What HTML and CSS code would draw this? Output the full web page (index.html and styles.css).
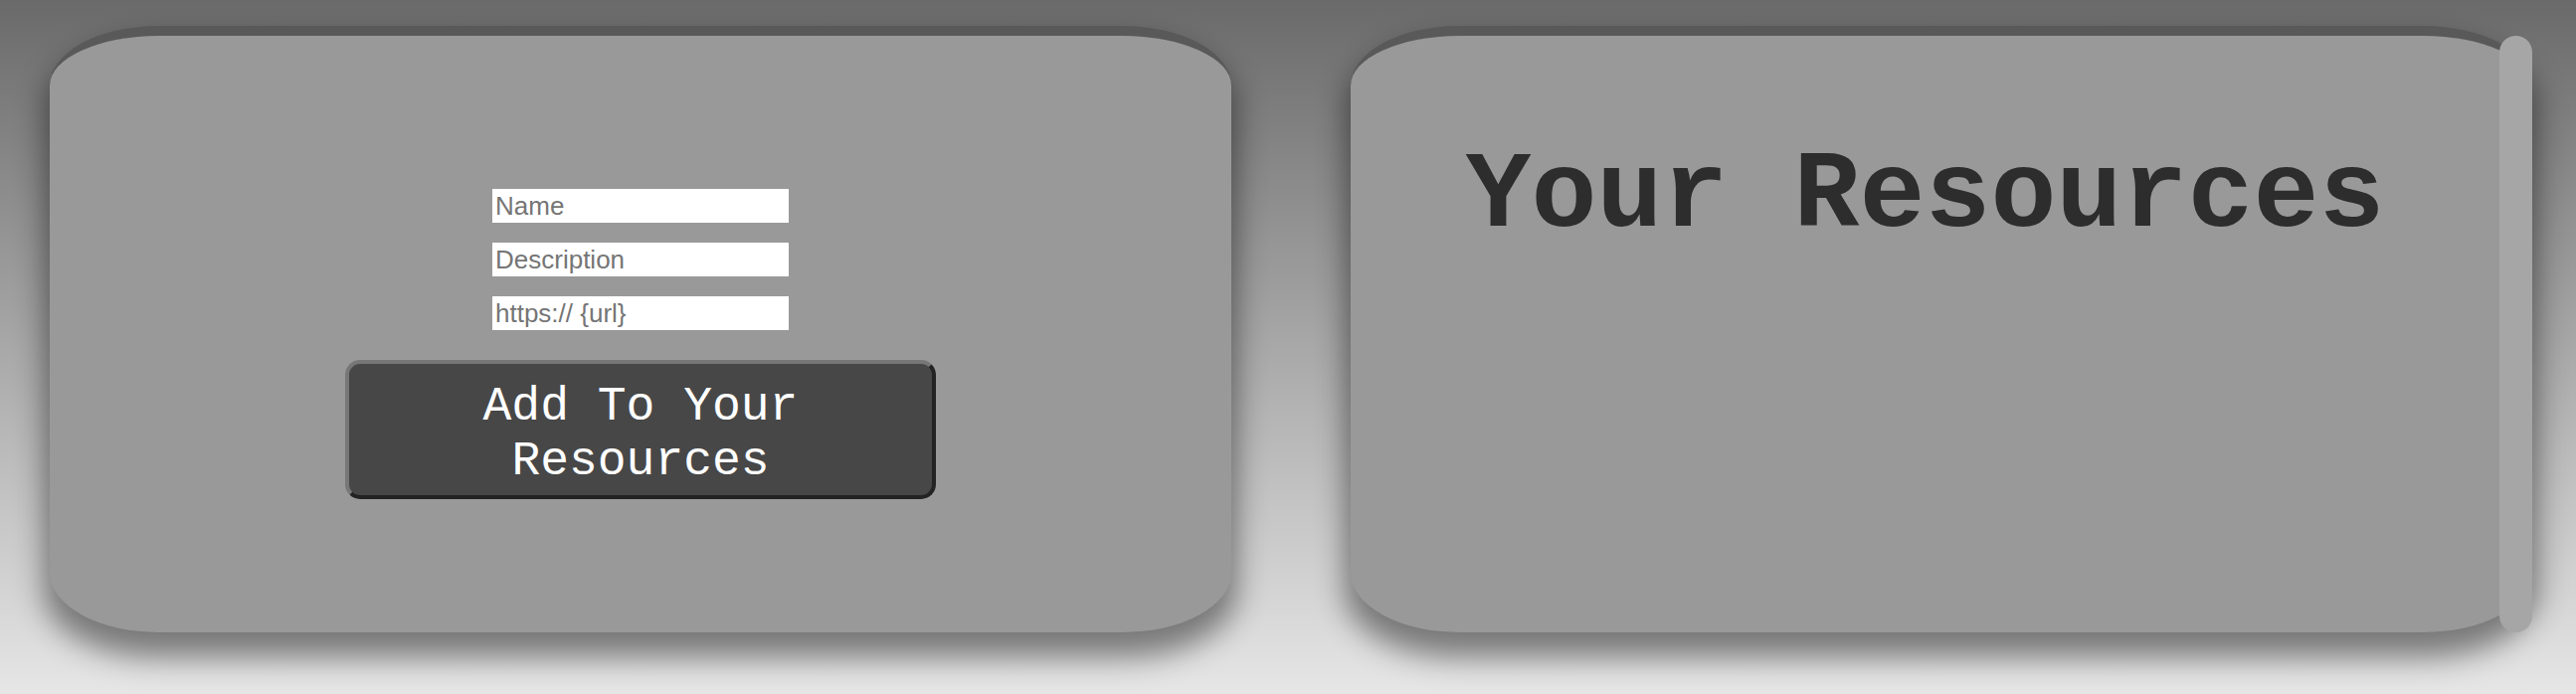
FILE: index.html
```html
<!DOCTYPE html>
<html lang="en">
<head>
<meta charset="utf-8">
<title>Resources</title>
<link rel="stylesheet" href="styles.css">
</head>
<body>
<main class="page">
  <section class="card add-card">
    <form class="add-form">
      <input class="field" type="text" placeholder="Name">
      <input class="field" type="text" placeholder="Description">
      <input class="field" type="text" placeholder="https:// {url}">
      <button class="add-btn" type="button">Add To Your Resources</button>
    </form>
  </section>
  <div class="list-wrap">
    <section class="card list-card">
      <h1 class="list-title">Your Resources</h1>
      <ul class="resource-list"></ul>
    </section>
    <div class="scroll-thumb" aria-hidden="true"></div>
  </div>
</main>
</body>
</html>
```

FILE: styles.css
```css
html, body {
  margin: 0;
  padding: 0;
  height: 100%;
}

body {
  background: linear-gradient(to bottom, #6a6a6a 0%, #e6e6e6 100%);
  font-family: "Liberation Sans", Arial, sans-serif;
  overflow: hidden;
}

.page {
  display: flex;
  gap: 120px;
  padding: 26px 44px 0 50px;
}

.card {
  box-sizing: border-box;
  width: 1188px;
  height: 610px;
  flex: 0 0 auto;
  background: #999999;
  border-top: 10px solid #595959;
  border-radius: 110px / 60px;
  box-shadow: 0 20px 30px 5px rgba(0, 0, 0, 0.45);
}

.add-form {
  display: flex;
  flex-direction: column;
  align-items: center;
  gap: 20px;
  padding-top: 154px;
  margin: 0;
}

.field {
  box-sizing: border-box;
  width: 298px;
  height: 34px;
  border: none;
  outline: none;
  padding: 1px 3px;
  margin: 0;
  background: #ffffff;
  font-family: "Liberation Sans", Arial, sans-serif;
  font-size: 26px;
  color: #222;
}

.field::placeholder {
  color: #757575;
}

.add-btn {
  box-sizing: border-box;
  width: 594px;
  margin-top: 10px;
  padding: 16px 0 6px;
  background: #474747;
  color: #ffffff;
  border: 4px solid;
  border-color: #777777 #232323 #232323 #777777;
  border-radius: 15px;
  font-family: "Liberation Mono", "Courier New", monospace;
  font-size: 48px;
  line-height: 55px;
  text-align: center;
  cursor: pointer;
}

.list-wrap {
  position: relative;
  flex: 0 0 auto;
}

.list-card {
  overflow: hidden;
  padding: 99px 33px 0 0;
}

.scroll-thumb {
  position: absolute;
  top: 10px;
  right: 0;
  bottom: 0;
  width: 33px;
  background: #a6a6a6;
  border-radius: 17px;
}

.list-title {
  margin: 0;
  text-align: center;
  font-family: "Liberation Mono", "Courier New", monospace;
  font-weight: bold;
  font-size: 110px;
  line-height: normal;
  color: #2d2d2d;
}

.resource-list {
  list-style: none;
  margin: 0;
  padding: 0;
}
```
